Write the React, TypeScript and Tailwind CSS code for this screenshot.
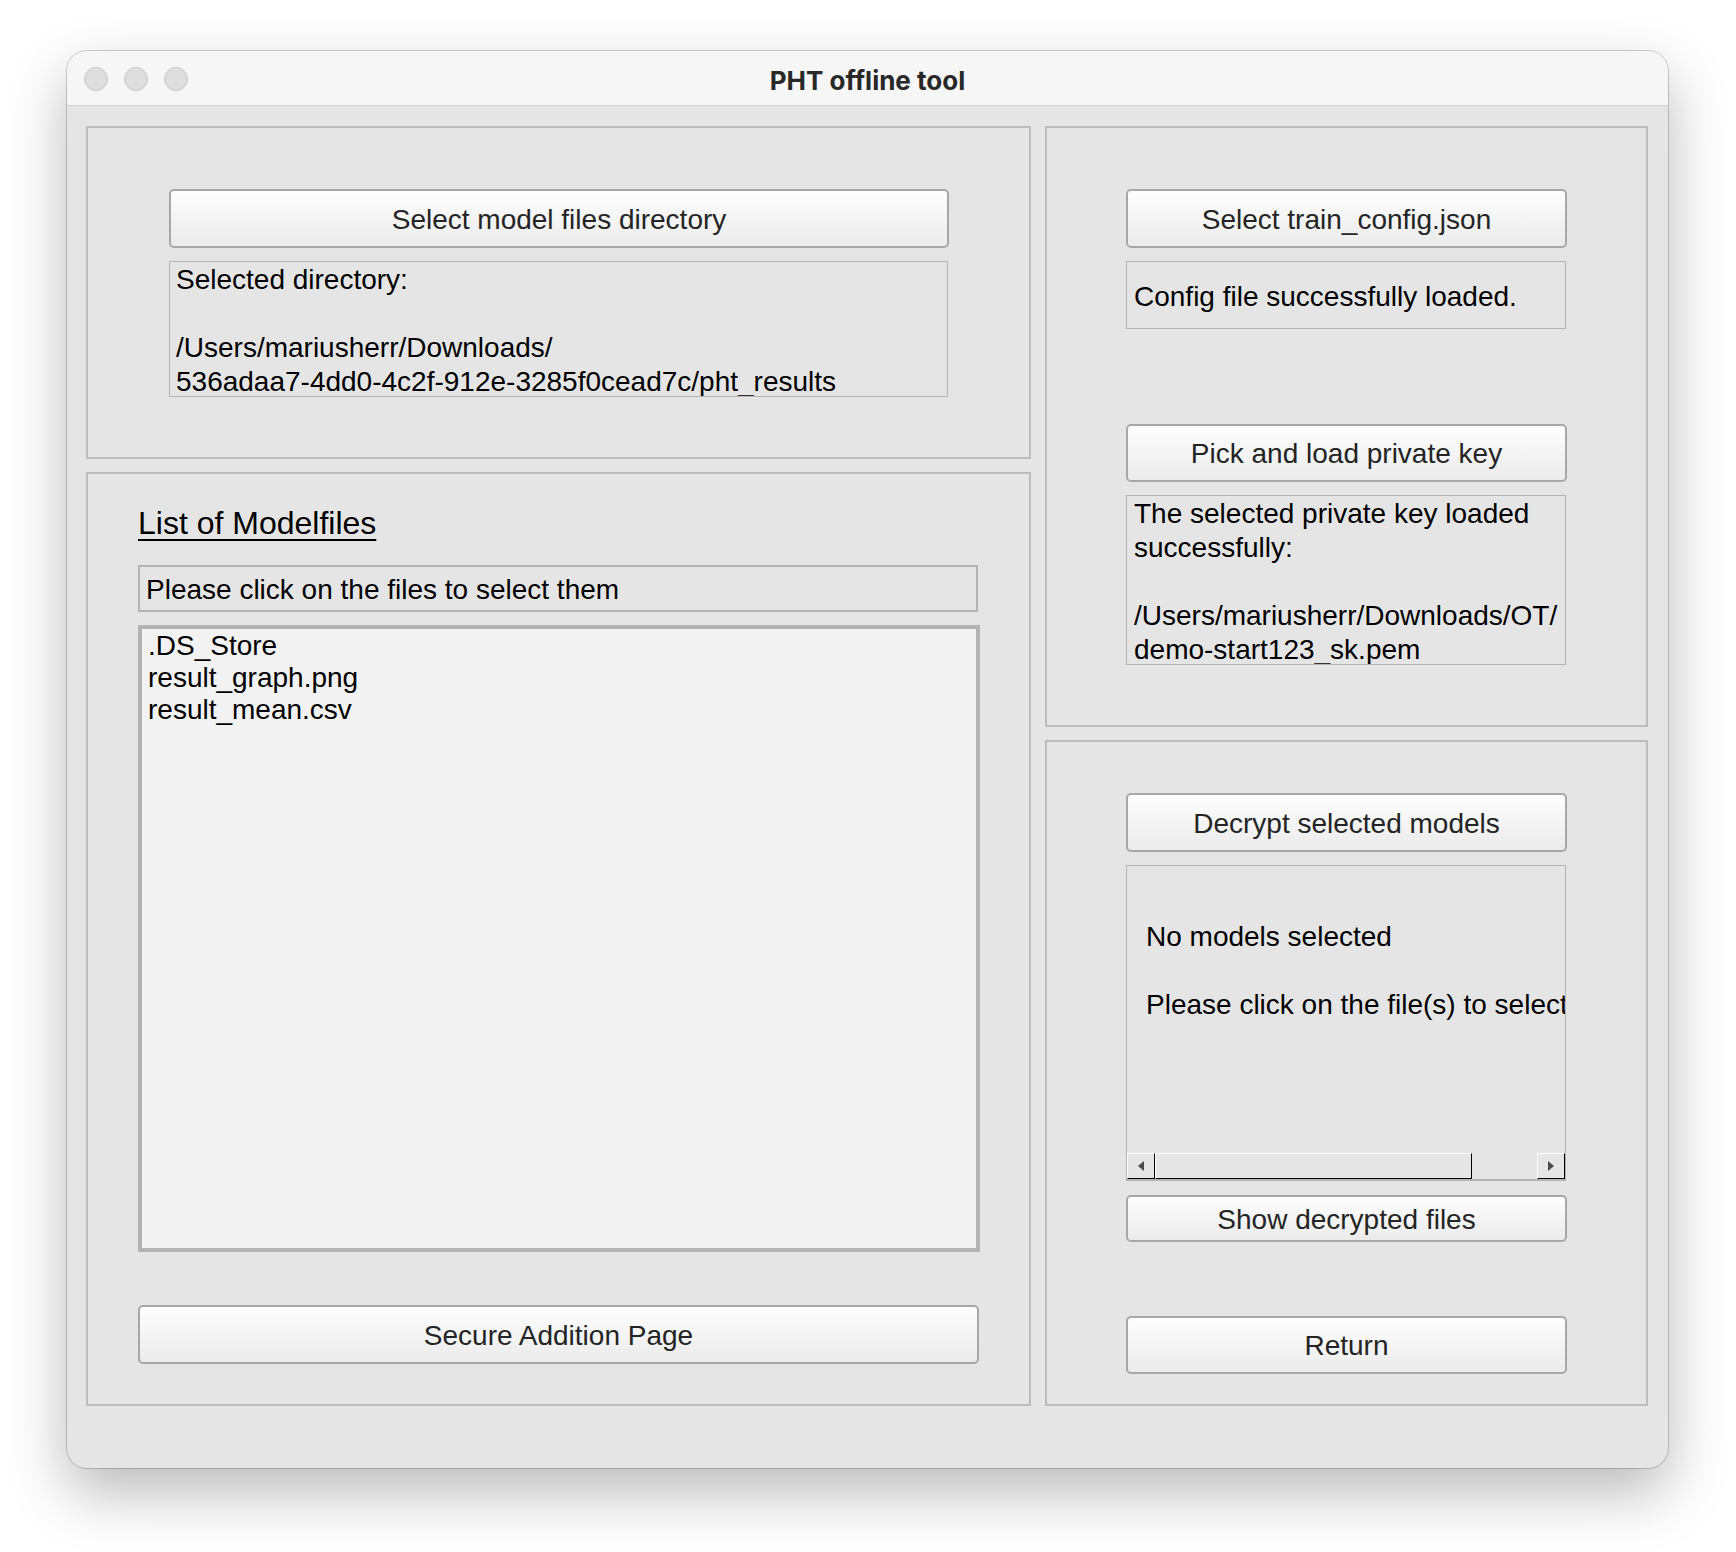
import React from "react";

const sans = { fontFamily: '"Liberation Sans", Arial, Helvetica, sans-serif' };

function MacButton({ label, className = "" }: { label: string; className?: string }) {
  return (
    <div
      className={`flex items-center justify-center rounded-[5px] border-2 border-[#a7a7a7] bg-linear-to-b from-[#fefefe] to-[#ebebeb] pt-[2px] text-[28px] leading-[34px] text-[#242424] ${className}`}>
      {label}
    </div>
  );
}

function Arrow({ dir }: { dir: "left" | "right" }) {
  return (
    <div className="flex h-full w-[28px] items-center justify-center border-t border-l border-t-white border-l-white border-r border-b border-r-black border-b-black bg-[#e6e6e6]">
      <svg width="8" height="12" viewBox="0 0 8 12">
        {dir === "left" ? (
          <polygon points="7,1 1,6 7,11" fill="#4a4a4a" />
        ) : (
          <polygon points="1,1 7,6 1,11" fill="#4a4a4a" />
        )}
      </svg>
    </div>
  );
}

export default function App() {
  return (
    <div className="min-h-[1552px] bg-white pl-[67px] pt-[51px]" style={sans}>
      <div className="flex h-[1417px] w-[1601px] flex-col overflow-hidden rounded-[20px] bg-[#e5e5e5] shadow-[0_0_0_1px_rgba(0,0,0,0.18),0_24px_60px_rgba(0,0,0,0.28)]">
        {/* title bar */}
        <div className="grid h-[55px] shrink-0 grid-cols-[1fr_auto_1fr] items-center border-b border-[#d2d2d2] bg-[#f6f6f6]">
          <div className="flex items-center gap-[16px] pl-[17px] pt-[2px]">
            <span className="h-[24px] w-[24px] rounded-full border border-[#c6c6c6] bg-[#dedede]" />
            <span className="h-[24px] w-[24px] rounded-full border border-[#c6c6c6] bg-[#dedede]" />
            <span className="h-[24px] w-[24px] rounded-full border border-[#c6c6c6] bg-[#dedede]" />
          </div>
          <div
            className="pt-[4px] text-[26px] font-bold text-[#282828]"
            style={{ fontFamily: 'Inter, "Liberation Sans", sans-serif' }}>
            PHT offline tool
          </div>
          <div />
        </div>

        {/* body */}
        <div className="flex gap-[14px] pl-[19px] pt-[20px] text-black">
          {/* left column */}
          <div className="flex w-[945px] flex-col gap-[13px]">
            <div className="h-[333px] border-2 border-[#bcbcbc] pl-[81px] pt-[61px]">
              <MacButton label="Select model files directory" className="h-[59px] w-[780px]" />
              <div className="mt-[13px] h-[136px] w-[779px] overflow-hidden border border-[#b4b4b4] px-[6px] pt-[1px] text-[28px] leading-[34px]">
                Selected directory:
                <br />
                <br />
                /Users/mariusherr/Downloads/
                <br />
                536adaa7-4dd0-4c2f-912e-3285f0cead7c/pht_results
              </div>
            </div>

            <div className="h-[934px] border-2 border-[#bcbcbc] pl-[50px] pt-[30px]">
              <div className="text-[32px] leading-[38px] underline decoration-2 underline-offset-[5px]">
                List of Modelfiles
              </div>
              <div className="mt-[23px] flex h-[47px] w-[840px] items-center border-2 border-[#b4b4b4] px-[6px] pt-[2px] text-[28px] leading-[34px]">
                Please click on the files to select them
              </div>
              <div className="mt-[13px] h-[627px] w-[842px] border-4 border-[#b3b3b3] bg-[#f2f2f2] px-[6px] pt-[1px] text-[28px] leading-[32px]">
                <div>.DS_Store</div>
                <div>result_graph.png</div>
                <div>result_mean.csv</div>
              </div>
              <MacButton label="Secure Addition Page" className="mt-[53px] h-[59px] w-[841px]" />
            </div>
          </div>

          {/* right column */}
          <div className="flex w-[603px] flex-col gap-[13px]">
            <div className="h-[601px] border-2 border-[#bcbcbc] pl-[79px] pt-[61px]">
              <MacButton label="Select train_config.json" className="h-[59px] w-[441px]" />
              <div className="mt-[13px] flex h-[68px] w-[440px] items-center border border-[#b4b4b4] px-[7px] pt-[3px] text-[28px] leading-[34px]">
                Config file successfully loaded.
              </div>
              <MacButton label="Pick and load private key" className="mt-[95px] h-[58px] w-[441px]" />
              <div className="mt-[13px] h-[170px] w-[440px] overflow-hidden border border-[#b4b4b4] px-[7px] pt-[1px] text-[28px] leading-[34px]">
                The selected private key loaded
                <br />
                successfully:
                <br />
                <br />
                /Users/mariusherr/Downloads/OT/
                <br />
                demo-start123_sk.pem
              </div>
            </div>

            <div className="h-[666px] border-2 border-[#bcbcbc] pl-[79px] pt-[51px]">
              <MacButton label="Decrypt selected models" className="h-[59px] w-[441px]" />
              <div className="mt-[13px] flex h-[316px] w-[440px] flex-col border border-[#b4b4b4]">
                <div className="flex-1 overflow-hidden whitespace-nowrap pl-[19px] pt-[54px] text-[28px] leading-[34px]">
                  No models selected
                  <br />
                  <br />
                  Please click on the file(s) to select them
                </div>
                <div className="flex h-[27px] shrink-0 border-b border-[#b4b4b4]">
                  <Arrow dir="left" />
                  <div className="h-full w-[317px] border-t border-l border-t-white border-l-white border-r border-b border-r-black border-b-black bg-[#e6e6e6]" />
                  <div className="flex-1" />
                  <Arrow dir="right" />
                </div>
              </div>
              <MacButton label="Show decrypted files" className="mt-[14px] h-[47px] w-[441px]" />
              <MacButton label="Return" className="mt-[74px] h-[58px] w-[441px]" />
            </div>
          </div>
        </div>
      </div>
    </div>
  );
}
